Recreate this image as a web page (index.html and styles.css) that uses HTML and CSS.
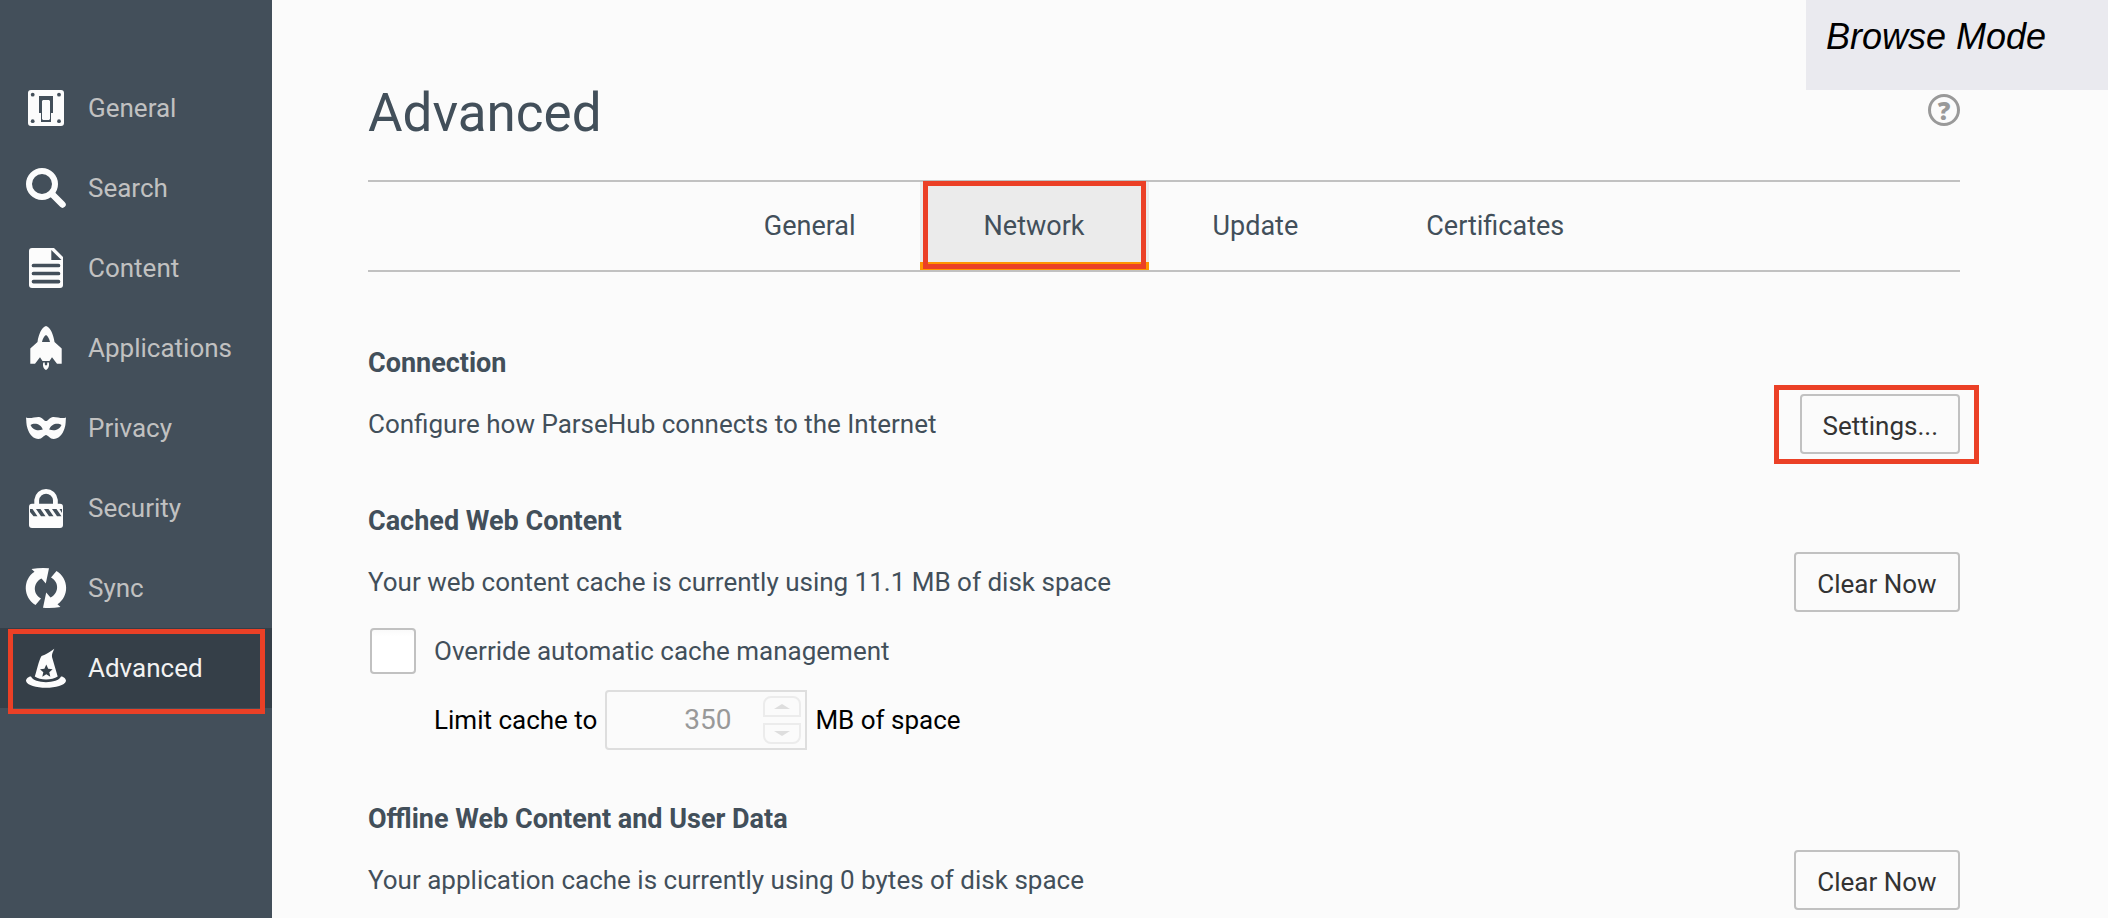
FILE: index.html
```html
<!DOCTYPE html>
<html lang="en">
<head>
    <meta charset="UTF-8">
    <title>Preferences - Advanced</title>
    <link rel="stylesheet" href="styles.css">
</head>
<body>
    <nav class="sidebar">
        <a class="category" href="#general">
            <svg class="category-icon" viewBox="0 0 40 40">
                <path fill-rule="evenodd" d="M5 2H35Q38 2 38 5V35Q38 38 35 38H5Q2 38 2 35V5Q2 2 5 2ZM13 8V25H15V34H25V25H27V8ZM17 12H23L24 13V31L23 32H17L16 31V13Z"/>
                <g class="cutout"><circle cx="6.7" cy="6.7" r="1.9"/><circle cx="33" cy="6.7" r="1.9"/><circle cx="6.7" cy="33.2" r="1.9"/><circle cx="33" cy="33.2" r="1.9"/></g>
            </svg>
            <span>General</span>
        </a>
        <a class="category" href="#search">
            <svg class="category-icon" viewBox="0 0 40 40">
                <circle cx="16" cy="16" r="13" fill="none" stroke="currentColor" stroke-width="6"/>
                <path d="M26 26L36.5 36.5" stroke="currentColor" stroke-width="6.5" stroke-linecap="round"/>
            </svg>
            <span>Search</span>
        </a>
        <a class="category" href="#content">
            <svg class="category-icon" viewBox="0 0 40 40">
                <path d="M6 0H28L37 9V37Q37 40 34 40H6Q3 40 3 37V3Q3 0 6 0Z"/>
                <path class="cutout" d="M25.3 2L35.5 12H25.3Z"/>
                <path class="cutout-line" d="M7.5 17.5H32.5M7.5 25.5H32.5M7.5 33.6H32.5" stroke-width="3.7" stroke-linecap="round"/>
            </svg>
            <span>Content</span>
        </a>
        <a class="category" href="#applications">
            <svg class="category-icon" viewBox="0 0 40 40">
                <path fill-rule="evenodd" d="M20 -2C15.500 -1 12.500 7 11.500 14L4.300 20.500V35.700H9L14 29.300L16.500 33H23.500L26 29.300L31 35.700H35.700V20.500L28.500 14C27.500 7 24.500 -1 20 -2ZM20 7C21.800 8 23.400 11 24 14H16C16.600 11 18.200 8 20 7Z"/>
                <path d="M17.300 34.500H18.800V36.500Q20 38.500 21.200 36.500V34.500H22.800C23.600 37.500 22.500 41 20 42C17.500 41 16.400 37.500 17.300 34.500Z"/>
            </svg>
            <span>Applications</span>
        </a>
        <a class="category" href="#privacy">
            <svg class="category-icon" viewBox="0 0 40 40">
                <path fill-rule="evenodd" d="M0 9.500C4 11 9 8.700 13 8.900C16 9 18 13 20 13C22 13 24 9 27 8.900C31 8.700 36 11 40 9.500C39.500 13 40 16 38.500 20.500C36.500 27 32 31 27.500 31C24 31 22 27 20 27C18 27 16 31 12.500 31C8 31 3.500 27 1.500 20.500C0 16 0.500 13 0 9.500ZM4.500 17C8 14.500 15 15.500 16.800 21.500C12 23 7 22.500 4.500 17ZM35.500 17C32 14.500 25 15.500 23.200 21.500C28 23 33 22.500 35.500 17Z"/>
            </svg>
            <span>Privacy</span>
        </a>
        <a class="category" href="#security">
            <svg class="category-icon" viewBox="0 0 40 40">
                <path d="M10.700 18V12A9.400 9.700 0 0 1 29.400 12V18" fill="none" stroke="currentColor" stroke-width="4.800"/>
                <path d="M6 15.700H34Q37 15.700 37 18.700V37Q37 40 34 40H6Q3 40 3 37V18.700Q3 15.700 6 15.700Z"/>
                <path class="cutout" d="M4 21H6.500L11.500 28.300H7.500L4 24ZM10 21H14.500L19.500 28.300H15ZM18 21H22.500L27.500 28.300H23ZM26 21H30.500L35.500 28.300H31ZM33.500 21H36V25Z"/>
            </svg>
            <span>Security</span>
        </a>
        <a class="category" href="#sync">
            <svg class="category-icon" viewBox="0 0 40 40">
                <path d="M9.500 37C-3 29.500 -3.500 11.500 8.500 3.800L5.500 1Q14 -0.500 23 0.200L19.800 15.500L15.500 10.500C7 14.500 6.500 26 15 30.500Z"/>
                <path d="M30.500 3C43 10.500 43.500 28.500 31.500 36.200L34.500 39Q26 40.500 17 39.800L20.200 24.500L24.500 29.500C33 25.500 33.500 14 25 9.500Z"/>
            </svg>
            <span>Sync</span>
        </a>
        <a class="category selected" href="#advanced">
            <svg class="category-icon" viewBox="0 0 40 40">
                <path d="M28.300 0.700C27 4 25.500 6 26 9L31.700 28.500C26 32.500 14 32.500 8.800 28.500C11 22 12.500 13 15.500 8C20 6.500 24 4 28.300 0.700Z"/>
                <path d="M5 28.500C8 36 32 36 35 28.500C38 28.500 40 31 40 33C38 42 2 42 0 33C0 31 2 28.500 5 28.500Z"/>
                <path class="cutout" d="M20.300 16.500L22.200 20.800L26.600 21.200L23.300 24.200L24.300 28.700L20.300 26.300L16.300 28.700L17.300 24.200L14 21.200L18.400 20.800Z"/>
            </svg>
            <span>Advanced</span>
            <span class="highlight highlight-category"></span>
        </a>
    </nav>

    <main class="content">
        <header class="header">
            <h1>Advanced</h1>
            <button class="help-button" type="button" aria-label="Help">?</button>
        </header>

        <div class="tabs" role="tablist">
            <button class="tab" type="button" role="tab">General</button>
            <button class="tab tab-selected" type="button" role="tab" aria-selected="true">Network<span class="highlight highlight-tab"></span></button>
            <button class="tab" type="button" role="tab">Update</button>
            <button class="tab" type="button" role="tab">Certificates</button>
        </div>

        <section class="group">
            <h2>Connection</h2>
            <div class="row">
                <span>Configure how ParseHub connects to the Internet</span>
                <div class="button-wrap">
                    <button class="button" type="button">Settings...</button>
                    <span class="highlight highlight-button"></span>
                </div>
            </div>
        </section>

        <section class="group">
            <h2>Cached Web Content</h2>
            <div class="row">
                <span>Your web content cache is currently using 11.1 MB of disk space</span>
                <button class="button button-clear" type="button">Clear Now</button>
            </div>
            <div class="check-row">
                <input class="checkbox" type="checkbox" id="override-cache">
                <label for="override-cache">Override automatic cache management</label>
            </div>
            <div class="limit-row">
                <label for="cache-size">Limit cache to</label>
                <div class="number-field">
                    <input type="number" id="cache-size" value="350" disabled>
                    <div class="spinner">
                        <button class="spin spin-up" type="button" aria-label="Increase" disabled><svg viewBox="0 0 16 5"><path d="M0 5L8 0L16 5Z"/></svg></button>
                        <button class="spin spin-down" type="button" aria-label="Decrease" disabled><svg viewBox="0 0 16 5"><path d="M0 0L8 5L16 0Z"/></svg></button>
                    </div>
                </div>
                <span>MB of space</span>
            </div>
        </section>

        <section class="group">
            <h2>Offline Web Content and User Data</h2>
            <div class="row">
                <span>Your application cache is currently using 0 bytes of disk space</span>
                <button class="button button-clear" type="button">Clear Now</button>
            </div>
        </section>
    </main>

    <div class="mode-badge">Browse Mode</div>
</body>
</html>
```

FILE: styles.css
```css
* {
    box-sizing: border-box;
}
body {
    display: flex;
    min-height: 100vh;
    margin: 0;
    background: #fbfbfb;
    color: #424f5a;
    font-family: Roboto, "Liberation Sans", sans-serif;
    font-size: 26px;
    line-height: 38px;
}
button, input {
    margin: 0;
    font: inherit;
    color: inherit;
}

/* Sidebar */
.sidebar {
    flex: 0 0 272px;
    padding-top: 68px;
    background: #434f5a;
}
.category {
    position: relative;
    display: flex;
    align-items: center;
    gap: 22px;
    height: 80px;
    padding-left: 26px;
    color: #c1c1c1;
    text-decoration: none;
}
.category-icon {
    width: 40px;
    height: 40px;
    overflow: visible;
    color: #fcfcfc;
    fill: currentColor;
}
.cutout {
    fill: #434f5a;
}
.cutout-line {
    stroke: #434f5a;
}
.selected {
    background: #353f48;
    color: #f2f2f2;
}
.selected .cutout {
    fill: #353f48;
}

/* Red frames drawn over the controls */
.highlight {
    position: absolute;
    border: 5px solid #eb4026;
    pointer-events: none;
}
.highlight-category {
    inset: 1px 7px -6px 8px;
}
.highlight-tab {
    inset: -1px 3px -7px 3px;
}
.highlight-button {
    inset: -9px -19px -10px -26px;
}

/* Main pane */
.content {
    flex: 1;
    padding: 80px 148px 8px 96px;
}
.header {
    display: flex;
    align-items: flex-start;
    justify-content: space-between;
    margin-bottom: 34px;
}
h1 {
    margin: 0;
    font-size: 53px;
    font-weight: 400;
    line-height: 66px;
}
.help-button {
    width: 32px;
    height: 32px;
    margin-top: 14px;
    padding: 0;
    border: 3px solid #999;
    border-radius: 50%;
    background: none;
    color: #999;
    font-family: "Open Sans", sans-serif;
    font-size: 25px;
    font-weight: 800;
    line-height: 26px;
}
.tabs {
    display: flex;
    justify-content: center;
    height: 92px;
    margin-bottom: 72px;
    border-top: 2px solid #c1c1c1;
    border-bottom: 2px solid #c1c1c1;
    font-size: 27px;
}
.tab {
    position: relative;
    padding: 0 64px;
    border: 0;
    background: none;
}
.tab-selected {
    padding-top: 8px;
    border-bottom: 8px solid #ff9500;
    background: #ebebeb;
}
.group {
    margin-bottom: 48px;
}
.group:last-child {
    margin-bottom: 0;
}
h2 {
    margin: 0 0 12px;
    font-size: 27px;
    font-weight: 700;
    line-height: 38px;
}
.row {
    display: flex;
    align-items: center;
    justify-content: space-between;
}
.button-wrap {
    position: relative;
}
.button {
    display: block;
    height: 60px;
    padding: 3px 20px 0;
    border: 2px solid #c1c1c1;
    border-radius: 4px;
    background: #fbfbfb;
    color: #333;
}
.button-clear {
    min-width: 166px;
}
.check-row {
    display: flex;
    align-items: center;
    gap: 18px;
    margin-top: 16px;
    padding-left: 2px;
}
.checkbox {
    appearance: none;
    width: 46px;
    height: 46px;
    border: 2px solid #c1c1c1;
    border-radius: 4px;
    background: linear-gradient(#fafafa, #fff 15%);
}
.limit-row {
    display: flex;
    align-items: center;
    gap: 8px;
    margin: 16px 0 50px;
    padding-left: 66px;
    color: #000;
}
.number-field {
    display: flex;
    align-items: center;
    width: 202px;
    height: 60px;
    padding-right: 4px;
    border: 2px solid #dedede;
    border-radius: 4px 0 0 4px;
}
.number-field input {
    flex: 1;
    min-width: 0;
    padding: 0 32px 0 0;
    border: 0;
    background: none;
    color: #999;
    font-size: 28px;
    text-align: right;
    appearance: textfield;
}
.number-field input::-webkit-inner-spin-button {
    display: none;
}
.spinner {
    display: flex;
    flex-direction: column;
    gap: 6px;
}
.spin {
    display: flex;
    align-items: center;
    justify-content: center;
    width: 38px;
    height: 21px;
    padding: 0;
    border: 2px solid #ececec;
    background: none;
}
.spin-up {
    border-radius: 8px 8px 0 0;
}
.spin-down {
    border-radius: 0 0 8px 8px;
}
.spin svg {
    width: 16px;
    height: 5px;
    fill: #dedede;
}

.mode-badge {
    position: absolute;
    top: 0;
    right: 0;
    width: 302px;
    height: 90px;
    padding: 17px 20px;
    background: #eaeaef;
    color: #000;
    font-family: "Liberation Sans", sans-serif;
    font-size: 36px;
    font-style: italic;
    line-height: 40px;
}
```
